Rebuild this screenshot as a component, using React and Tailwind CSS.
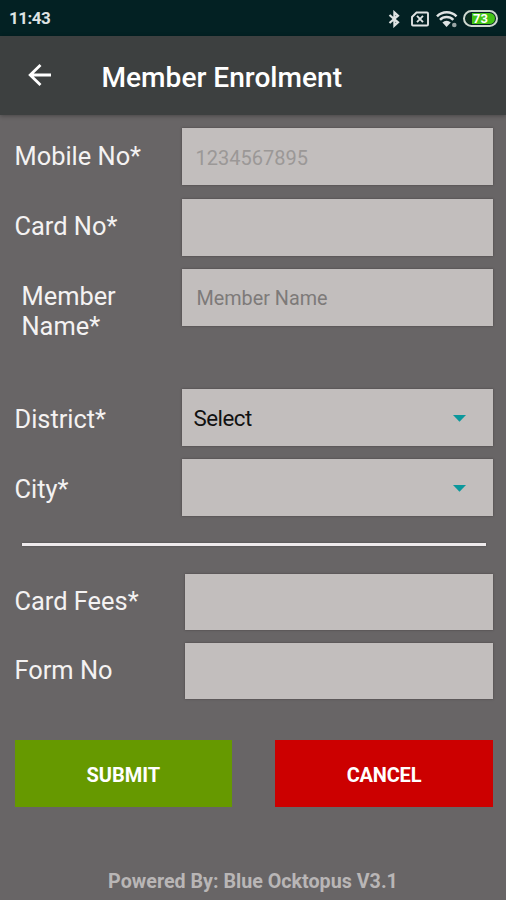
import { useState } from "react";

function StatusBar() {
  return (
    <div className="flex h-9 items-center justify-between bg-[#032123] pt-px pl-[9px] pr-[8px] text-[#dfe3e3]">
      <span className="text-[17px] leading-none font-bold tracking-[-0.5px]">11:43</span>
      <div className="flex items-center">
        {/* Bluetooth */}
        <svg width="14" height="18" viewBox="0 0 14 18" fill="none" stroke="currentColor" strokeWidth="2.2">
          <path d="M1.5 5 L10 12.3 L6.4 15.6 V2.4 L10 5.7 L1.5 13" />
        </svg>
        {/* No sim */}
        <svg className="ml-[9px]" width="18" height="16" viewBox="0 0 18 16" fill="none" stroke="currentColor" strokeWidth="1.9">
          <path d="M5.5 1.5H16a1 1 0 0 1 1 1v11a1 1 0 0 1-1 1H2a1 1 0 0 1-1-1V6z" />
          <path d="M6 4.9l6 6.2M12 4.9l-6 6.2" />
        </svg>
        {/* Wifi */}
        <svg className="ml-[7px]" width="22" height="18" viewBox="0 0 22 18" fill="none" stroke="currentColor" strokeWidth="2.5">
          <path d="M1 6.4a13.5 13.5 0 0 1 19.5 0" />
          <path d="M4 9.9a9.3 9.3 0 0 1 13.3 0" />
          <path d="M6.4 12.4a6 6 0 0 1 8.4 0L10.6 17z" fill="currentColor" stroke="none" />
          <circle cx="18.3" cy="15" r="2.3" fill="#9aa5a5" stroke="none" />
        </svg>
        <div className="ml-[5px] flex h-[17px] w-[35px] rounded-full border-2 border-[#cfd8cf] p-px">
          <div className="flex-1 rounded-full bg-linear-to-r from-[#0b2d1e] from-22% to-[#43c415] to-22% text-center text-[13px] leading-[11px] font-bold text-white">
            73
          </div>
        </div>
      </div>
    </div>
  );
}

function Header() {
  return (
    <div className="flex h-[79px] items-center bg-[#3d4040] pt-[3px] shadow-[0_1px_4px_rgba(0,0,0,0.3)]">
      <button className="-mt-[4px] ml-[27px]">
        <svg width="25" height="24" viewBox="0 0 25 24" fill="none" stroke="#fff" strokeWidth="2.8">
          <path d="M24 12H4M13.5 2L3.2 12L13.5 22" />
        </svg>
      </button>
      <h1 className="ml-[49.5px] pt-[2px] text-[28.1px] leading-none font-medium text-white">
        Member Enrolment
      </h1>
    </div>
  );
}

const boxClass =
  "bg-[#c2bebd] shadow-[0_0_2px_rgba(50,45,45,0.6)] outline-none";
const labelClass = "shrink-0 text-[25.4px] leading-[29.5px] text-[#f4f2f2]";

function Row({ label, children }) {
  return (
    <div className="flex">
      <label className={`${labelClass} w-[167px] pt-[14px]`}>{label}</label>
      {children}
    </div>
  );
}

function Select({ value }) {
  return (
    <button
      className={`${boxClass} flex h-[57px] flex-1 items-center justify-between pt-[2px] pl-[12px] pr-[27px] text-[22.3px] tracking-[-0.5px] text-[#111]`}
    >
      <span className="pt-[2px]">{value}</span>
      <svg width="13" height="7" viewBox="0 0 13 7" fill="#0b989c">
        <path d="M0 0h13L6.5 6.8z" />
      </svg>
    </button>
  );
}

export default function App() {
  const [mobile, setMobile] = useState("");
  const [cardNo, setCardNo] = useState("");
  const [name, setName] = useState("");

  return (
    <div className="flex h-[900px] w-[506px] flex-col overflow-hidden bg-[#686566] font-[Roboto,sans-serif]">
      <StatusBar />
      <Header />

      <div className="pt-[13.4px] pr-[13px] pl-[14.5px]">
        <div className="flex flex-col gap-[13.4px]">
          <Row label="Mobile No*">
            <input
              value={mobile}
              onChange={(e) => setMobile(e.target.value)}
              placeholder="1234567895"
              className={`${boxClass} h-[57px] min-w-0 flex-1 pt-[2px] pl-[14px] text-[20px] placeholder:text-[#9b9897]`}
            />
          </Row>
          <div className="flex">
            <div className={`${labelClass} w-[167px] pt-[13px]`}>Card No*</div>
            <input
              value={cardNo}
              onChange={(e) => setCardNo(e.target.value)}
              className={`${boxClass} h-[57px] min-w-0 flex-1 pl-[14px] text-[20px]`}
            />
          </div>
          <div className="flex h-[106px]">
            <div className={`${labelClass} w-[167px] pt-[13.2px] pr-[40px] pl-[7px]`}>
              Member Name*
            </div>
            <input
              value={name}
              onChange={(e) => setName(e.target.value)}
              placeholder="Member Name"
              className={`${boxClass} h-[57px] min-w-0 flex-1 pt-[2px] pl-[15px] text-[19.8px] placeholder:text-[#7d7a79]`}
            />
          </div>
          <div className="flex">
            <div className={`${labelClass} w-[167px] pt-[16px]`}>District*</div>
            <Select value="Select" />
          </div>
          <div className="flex">
            <div className={`${labelClass} w-[167px] pt-[16px]`}>City*</div>
            <Select value="" />
          </div>
        </div>

        <div className="mt-[27px] mr-[7px] ml-[7px] h-[3px] bg-[#eeeaec] shadow-[0_0_2px_rgba(50,45,45,0.6)]" />

        <div className="mt-[28px] flex flex-col gap-[13px]">
          <div className="flex h-[56px]">
            <div className={`${labelClass} w-[170.5px] pt-[13px]`}>Card Fees*</div>
            <input className={`${boxClass} min-w-0 flex-1 pl-[14px] text-[20px]`} />
          </div>
          <div className="flex h-[56px]">
            <div className={`${labelClass} w-[170.5px] pt-[13px]`}>Form No</div>
            <input className={`${boxClass} min-w-0 flex-1 pl-[14px] text-[20px]`} />
          </div>
        </div>

        <div className="mt-[41px] flex justify-between">
          <button className="h-[67px] w-[217.7px] bg-[#669900] pt-[3px] text-[20px] font-bold text-white">
            SUBMIT
          </button>
          <button className="h-[67px] w-[218px] bg-[#cc0000] pt-[3px] text-[20px] font-bold tracking-[-0.2px] text-white">
            CANCEL
          </button>
        </div>
      </div>

      <p className="mt-auto pb-[6px] text-center text-[19.7px] leading-[24px] font-bold text-[#b9b6b6]">
        Powered By: Blue Ocktopus V3.1
      </p>
    </div>
  );
}
